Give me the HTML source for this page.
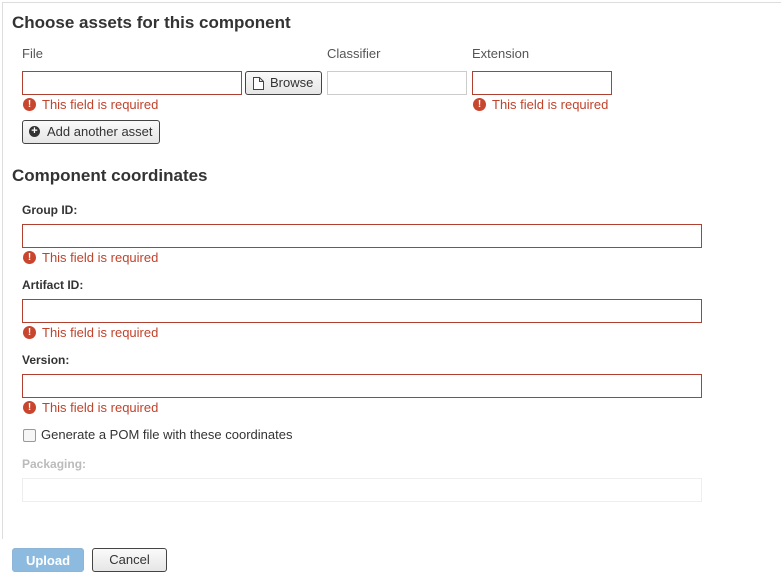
<!DOCTYPE html>
<html><head><style>
body{margin:0;width:781px;height:579px;background:#fff;font-family:"Liberation Sans",sans-serif;color:#333;position:relative;overflow:hidden}
.a{position:absolute}
.frame{left:2px;top:2px;width:779px;height:536px;border-left:1px solid #ddd;border-top:1px solid #ddd}
h2{position:absolute;margin:0;font-size:17px;font-weight:bold;color:#333}
.lbl{position:absolute;font-size:13px;color:#555}
.blbl{position:absolute;font-size:12px;font-weight:bold;color:#333}
.in{position:absolute;box-sizing:border-box;border:1px solid #b04030;background:#fff;height:24px}
.err{position:absolute;font-size:13px;color:#c0432c;height:14px;line-height:14px}
.err i{position:absolute;left:0;top:0;width:13px;height:13px;border-radius:50%;background:#c8452e;color:#fff;font-style:normal;font-weight:bold;font-size:10px;text-align:center;line-height:13px}
.err span{position:absolute;left:19px;top:0;white-space:nowrap}
.btn{position:absolute;box-sizing:border-box;border:1px solid #444;border-radius:3px;background:linear-gradient(#fafafa,#e6e6e6);font-size:13px;color:#333;line-height:22px}
</style></head><body>
<div class="a frame"></div>
<h2 style="left:12px;top:13px">Choose assets for this component</h2>
<div class="lbl" style="left:22px;top:46px">File</div>
<div class="lbl" style="left:327px;top:46px">Classifier</div>
<div class="lbl" style="left:472px;top:46px">Extension</div>
<div class="in" style="left:22px;top:71px;width:220px"></div>
<div class="btn" style="left:245px;top:71px;width:77px;height:24px;padding-left:24px">Browse
<svg class="a" style="left:7px;top:5px" width="11" height="13" viewBox="0 0 11 13"><path d="M0.5 0.5h6l4 4v8h-10z M6.5 0.5v4h4" fill="#fff" stroke="#444"/></svg></div>
<div class="in" style="left:327px;top:71px;width:140px;border-color:#ccc"></div>
<div class="in" style="left:472px;top:71px;width:140px"></div>
<div class="err" style="left:23px;top:98px"><i>!</i><span>This field is required</span></div>
<div class="err" style="left:473px;top:98px"><i>!</i><span>This field is required</span></div>
<div class="btn" style="left:22px;top:120px;width:138px;height:24px;padding-left:24px">Add another asset
<div class="a" style="left:6px;top:5px;width:11px;height:11px;border-radius:50%;background:#333;color:#fff;font-size:11px;line-height:11px;text-align:center;font-weight:bold">+</div></div>
<h2 style="left:12px;top:166px">Component coordinates</h2>
<div class="blbl" style="left:22px;top:203px">Group ID:</div>
<div class="in" style="left:22px;top:224px;width:680px"></div>
<div class="err" style="left:23px;top:251px"><i>!</i><span>This field is required</span></div>
<div class="blbl" style="left:22px;top:278px">Artifact ID:</div>
<div class="in" style="left:22px;top:299px;width:680px"></div>
<div class="err" style="left:23px;top:326px"><i>!</i><span>This field is required</span></div>
<div class="blbl" style="left:22px;top:353px">Version:</div>
<div class="in" style="left:22px;top:374px;width:680px"></div>
<div class="err" style="left:23px;top:401px"><i>!</i><span>This field is required</span></div>
<div class="a" style="left:23px;top:429px;width:11px;height:11px;border:1px solid #999;border-radius:2px;background:#f6f6f6"></div>
<div class="lbl" style="left:41px;top:427px;color:#333">Generate a POM file with these coordinates</div>
<div class="blbl" style="left:22px;top:457px;color:#bbb">Packaging:</div>
<div class="in" style="left:22px;top:478px;width:680px;border-color:#eee"></div>
<div class="a" style="left:12px;top:548px;width:72px;height:24px;border:1px solid #8fb5d6;border-radius:3px;background:#8dbbe0;color:#fff;font-size:13px;font-weight:bold;text-align:center;line-height:24px;box-sizing:border-box">Upload</div>
<div class="btn" style="left:92px;top:548px;width:75px;height:24px;text-align:center">Cancel</div>
</body></html>
